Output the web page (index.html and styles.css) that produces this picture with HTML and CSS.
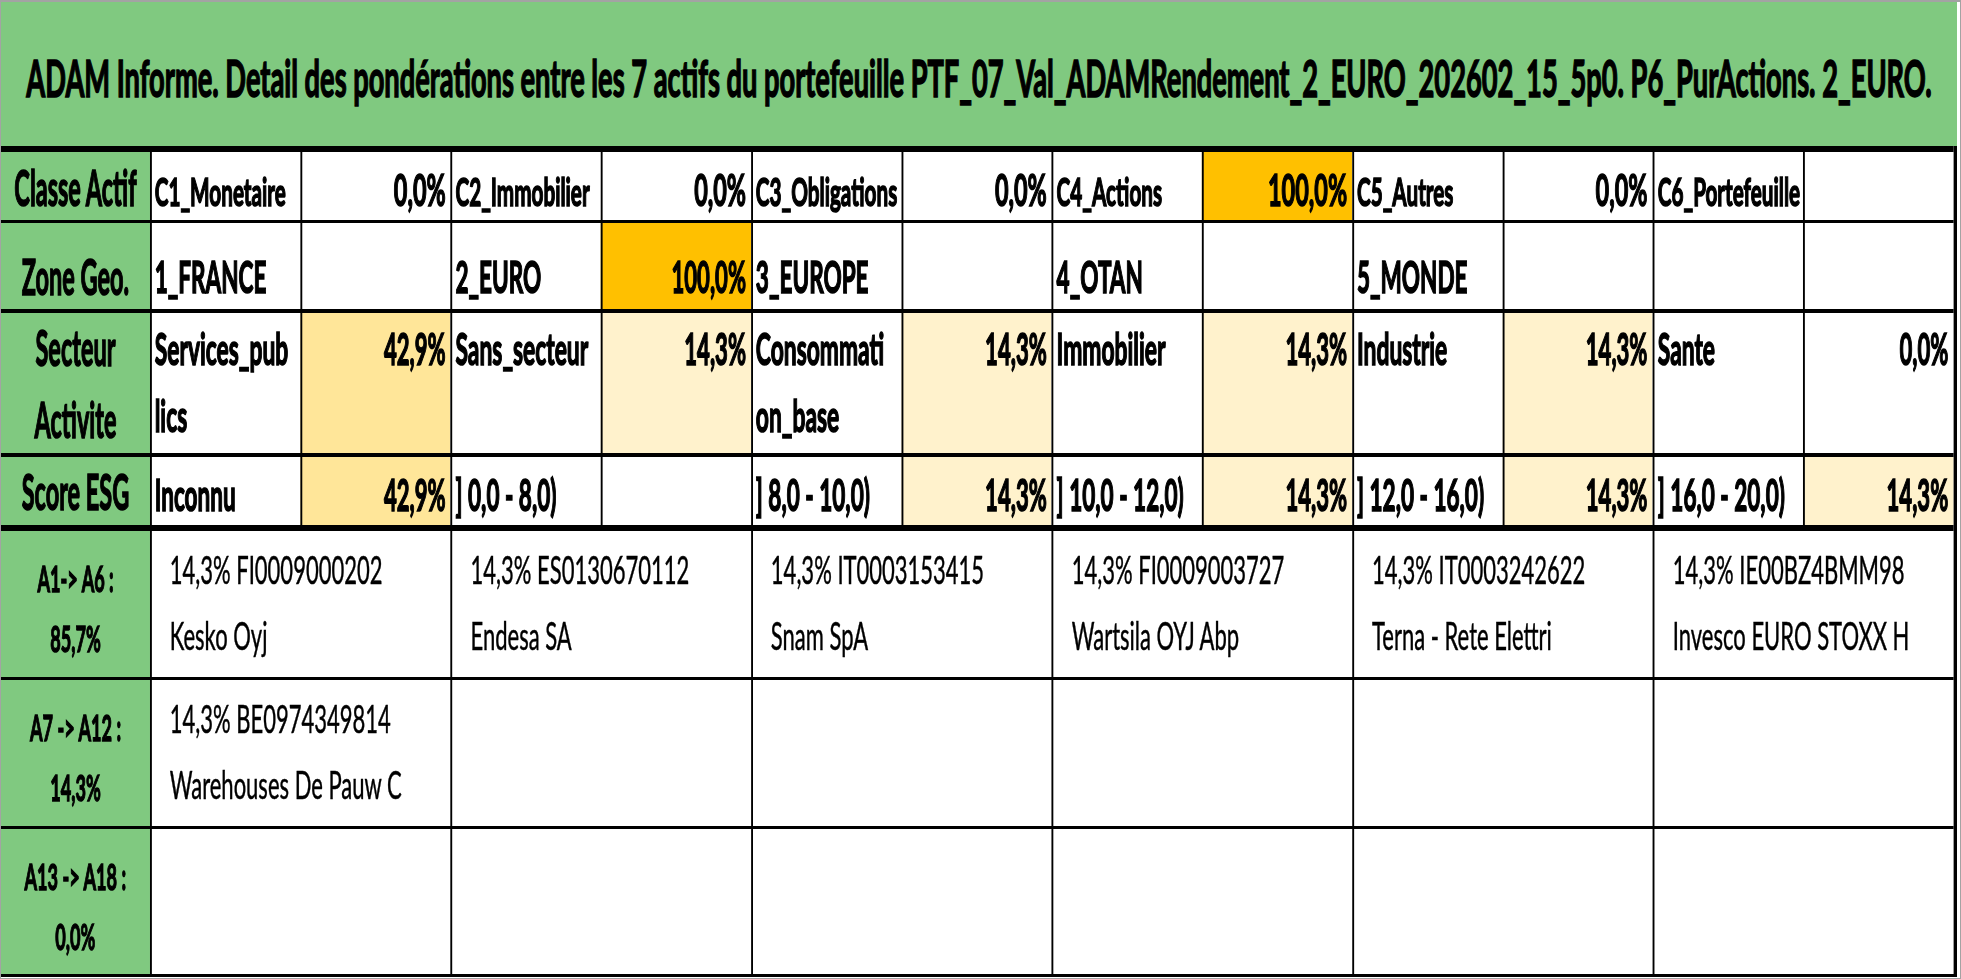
FILE: index.html
```html
<!DOCTYPE html>
<html lang="fr">
<head>
<meta charset="utf-8">
<title>ADAM Informe</title>
<link rel="stylesheet" href="styles.css">
</head>
<body>
<div class="page">
  <div class="sheet">
    <div class="title"><span>ADAM Informe. Detail des pondérations entre les 7 actifs du portefeuille PTF_07_Val_ADAMRendement_2_EURO_202602_15_5p0. P6_PurActions. 2_EURO.</span></div>
    <div class="grid">
      <div class="row r1">
        <div class="cell lab"><span>Classe Actif</span></div>
        <div class="cell"><span>C1_Monetaire</span></div>
        <div class="cell pct"><span>0,0%</span></div>
        <div class="cell"><span>C2_Immobilier</span></div>
        <div class="cell pct"><span>0,0%</span></div>
        <div class="cell"><span>C3_Obligations</span></div>
        <div class="cell pct"><span>0,0%</span></div>
        <div class="cell"><span>C4_Actions</span></div>
        <div class="cell pct f-or"><span>100,0%</span></div>
        <div class="cell"><span>C5_Autres</span></div>
        <div class="cell pct"><span>0,0%</span></div>
        <div class="cell"><span>C6_Portefeuille</span></div>
        <div class="cell pct"></div>
      </div>
      <div class="row r2">
        <div class="cell lab"><span>Zone Geo.</span></div>
        <div class="cell"><span>1_FRANCE</span></div>
        <div class="cell pct"></div>
        <div class="cell"><span>2_EURO</span></div>
        <div class="cell pct f-or"><span>100,0%</span></div>
        <div class="cell"><span>3_EUROPE</span></div>
        <div class="cell pct"></div>
        <div class="cell"><span>4_OTAN</span></div>
        <div class="cell pct"></div>
        <div class="cell"><span>5_MONDE</span></div>
        <div class="cell pct"></div>
        <div class="cell"></div>
        <div class="cell pct"></div>
      </div>
      <div class="row r3">
        <div class="cell lab"><span>Secteur<br>Activite</span></div>
        <div class="cell"><span>Services_pub<br>lics</span></div>
        <div class="cell pct f-y"><span>42,9%</span></div>
        <div class="cell"><span>Sans_secteur</span></div>
        <div class="cell pct f-p"><span>14,3%</span></div>
        <div class="cell"><span>Consommati<br>on_base</span></div>
        <div class="cell pct f-p"><span>14,3%</span></div>
        <div class="cell"><span>Immobilier</span></div>
        <div class="cell pct f-p"><span>14,3%</span></div>
        <div class="cell"><span>Industrie</span></div>
        <div class="cell pct f-p"><span>14,3%</span></div>
        <div class="cell"><span>Sante</span></div>
        <div class="cell pct"><span>0,0%</span></div>
      </div>
      <div class="row r4">
        <div class="cell lab"><span>Score ESG</span></div>
        <div class="cell"><span>Inconnu</span></div>
        <div class="cell pct f-y"><span>42,9%</span></div>
        <div class="cell"><span>] 0,0 - 8,0)</span></div>
        <div class="cell pct"></div>
        <div class="cell"><span>] 8,0 - 10,0)</span></div>
        <div class="cell pct f-p"><span>14,3%</span></div>
        <div class="cell"><span>] 10,0 - 12,0)</span></div>
        <div class="cell pct f-p"><span>14,3%</span></div>
        <div class="cell"><span>] 12,0 - 16,0)</span></div>
        <div class="cell pct f-p"><span>14,3%</span></div>
        <div class="cell"><span>] 16,0 - 20,0)</span></div>
        <div class="cell pct f-p"><span>14,3%</span></div>
      </div>
      <div class="row assets r5">
        <div class="cell lab"><span>A1-&gt; A6 :<br>85,7%</span></div>
        <div class="cell"><span>14,3% FI0009000202<br>Kesko Oyj</span></div>
        <div class="cell"><span>14,3% ES0130670112<br>Endesa SA</span></div>
        <div class="cell"><span>14,3% IT0003153415<br>Snam SpA</span></div>
        <div class="cell"><span>14,3% FI0009003727<br>Wartsila OYJ Abp</span></div>
        <div class="cell"><span>14,3% IT0003242622<br>Terna - Rete Elettri</span></div>
        <div class="cell"><span>14,3% IE00BZ4BMM98<br>Invesco EURO STOXX H</span></div>
      </div>
      <div class="row assets r6">
        <div class="cell lab"><span>A7 -&gt; A12 :<br>14,3%</span></div>
        <div class="cell"><span>14,3% BE0974349814<br>Warehouses De Pauw C</span></div>
        <div class="cell"></div>
        <div class="cell"></div>
        <div class="cell"></div>
        <div class="cell"></div>
        <div class="cell"></div>
      </div>
      <div class="row assets r7">
        <div class="cell lab"><span>A13 -&gt; A18 :<br>0,0%</span></div>
        <div class="cell"></div>
        <div class="cell"></div>
        <div class="cell"></div>
        <div class="cell"></div>
        <div class="cell"></div>
        <div class="cell"></div>
      </div>
    </div>
  </div>
</div>
</body>
</html>
```
FILE: styles.css
```css
html, body {
  margin: 0;
  padding: 0;
  background: #ffffff;
  overflow: hidden;
}

.page {
  width: 1961px;
  height: 979px;
  box-sizing: border-box;
  border: 1px solid #a3a3a3;
  border-top-width: 2px;
  padding: 0 3px 1px 0;
  overflow: hidden;
  font-family: Lato, "Open Sans", "DejaVu Sans", sans-serif;
  color: #000000;
}

/* The sheet is laid out wide, then condensed horizontally like the
   narrow spreadsheet rendering of the original. */
.sheet {
  --k: 0.47;
  width: calc(1956px / var(--k));
  transform: scaleX(var(--k));
  transform-origin: 0 0;
}

.title {
  height: 144px;
  box-sizing: border-box;
  background: #80c980;
  display: flex;
  align-items: flex-end;
  justify-content: center;
  padding-bottom: 43px;
  font-weight: 700;
  font-size: 52px;
  line-height: 1;
  white-space: nowrap;
  -webkit-text-stroke: 1.6px #000;
}

.title > span {
  display: block;
  transform: scaleX(1.115);
  transform-origin: center;
}

.grid {
  border-right: calc(4px / var(--k)) solid #000;
  border-bottom: 3px solid #000;
}

.row {
  display: grid;
  grid-template-columns: calc(149px / var(--k)) repeat(12, minmax(0, 1fr));
  border-top: 3px solid #000;
}

.row.assets {
  grid-template-columns: calc(149px / var(--k)) repeat(6, minmax(0, 1fr));
}

.r1 { height: 68px; border-top-width: 6px; }
.r2 { height: 86px; border-top-width: 3px; }
.r3 { height: 140px; border-top-width: 4px; }
.r4 { height: 68px; border-top-width: 4px; }
.r5 { height: 146px; border-top-width: 6px; }
.r6 { height: 146px; border-top-width: 3px; }
.r7 { height: 145px; border-top-width: 3px; }

.cell {
  --sx: 1;
  box-sizing: border-box;
  border-left: calc(2px / var(--k)) solid #000;
  display: flex;
  align-items: flex-end;
  justify-content: flex-start;
  overflow: hidden;
  white-space: nowrap;
  padding-left: calc(3px / var(--k));
  font-weight: 700;
  line-height: 1;
  background: #ffffff;
  -webkit-text-stroke: 1.6px #000;
}

.cell > span {
  display: block;
  flex: none;
  transform: scaleX(var(--sx));
  transform-origin: left center;
}

.pct {
  justify-content: flex-end;
  padding-left: 0;
  padding-right: calc(5px / var(--k));
}

.pct > span { transform-origin: right center; }

.f-or { background: #ffc000; }
.f-y { background: #ffe699; }
.f-p { background: #fff2cc; }

/* row 1 */
.r1 .cell { padding-bottom: 9px; font-size: 39px; --sx: 1.13; }
.r1 .pct { font-size: 43px; --sx: 1.16; }

/* row 2 */
.r2 .cell { padding-bottom: 11px; font-size: 43px; --sx: 1.116; }
.r2 .pct { --sx: 1.093; }

/* row 3 : wrapped, top aligned */
.r3 .cell {
  align-items: flex-start;
  padding-top: 2px;
  font-size: 43px;
  line-height: 67px;
  --sx: 1.13;
}
.r3 .pct { --sx: 1.093; }

/* row 4 */
.r4 .cell { padding-bottom: 9px; font-size: 43px; --sx: 1.116; }
.r4 .pct { --sx: 1.093; }

/* asset rows */
.assets .cell {
  align-items: flex-start;
  padding-top: 5px;
  padding-left: calc(18px / var(--k));
  font-weight: 400;
  font-size: 39px;
  line-height: 66px;
  -webkit-text-stroke: 0.5px #000;
  --sx: 1.2;
}

/* label column */
.cell.lab {
  --sx: 1;
  background: #80c980;
  border-left: none;
  justify-content: center;
  text-align: center;
  padding-left: 0;
  padding-right: 0;
  font-size: 50px;
}

.lab > span { transform-origin: center; }

.r1 .cell.lab { padding-bottom: 8px; }
.r2 .cell.lab { padding-bottom: 8px; }
.r4 .cell.lab { padding-bottom: 9px; }

.r3 .cell.lab {
  align-items: center;
  padding-top: 0;
  line-height: 72px;
}

.assets .cell.lab {
  --sx: 1.07;
  align-items: flex-start;
  padding-top: 17px;
  font-weight: 700;
  font-size: 36px;
  line-height: 60px;
  -webkit-text-stroke: 1.4px #000;
}
```
